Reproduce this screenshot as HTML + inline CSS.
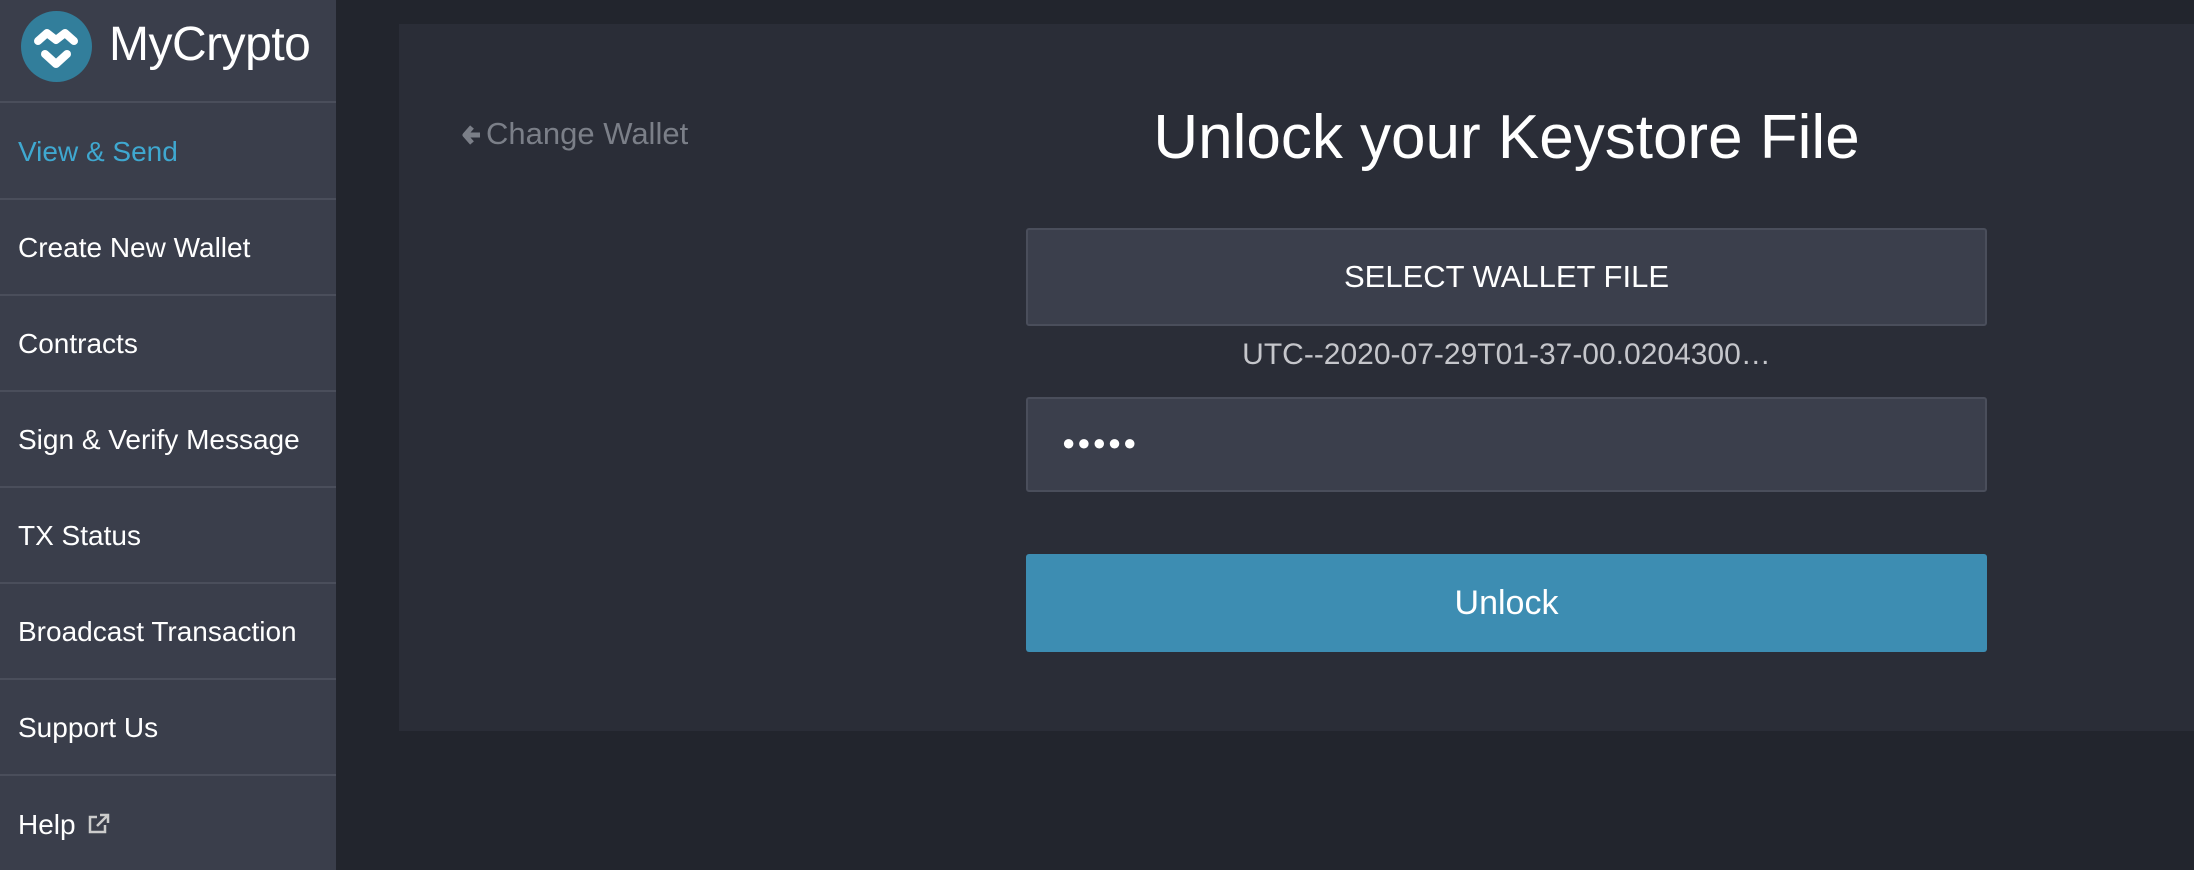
<!DOCTYPE html>
<html><head><meta charset="utf-8"><style>
*{box-sizing:border-box;margin:0;padding:0}
body{width:2194px;height:870px;background:#22252d;font-family:"Liberation Sans",sans-serif;position:relative;overflow:hidden}
.side{position:absolute;left:0;top:0;width:336px;height:870px;background:#3a3e4b}
.logo{position:absolute;left:21px;top:11px;width:71px;height:71px;border-radius:50%;background:#327e9b}
.brand{position:absolute;left:109px;top:17px;font-size:48px;color:#fff;letter-spacing:-0.5px}
.sep{position:absolute;left:0;width:336px;height:2px;background:#4a4e5b}
.item{position:absolute;left:18px;font-size:28px;color:#fff;transform:translateY(-50%)}
.panel{position:absolute;left:399px;top:24px;width:1800px;height:707px;background:#2a2d37}
.back{position:absolute;left:462px;top:116px;font-size:31px;color:#7b7f88}
.title{position:absolute;left:1026px;width:961px;top:102px;text-align:center;font-size:62px;color:#fff}
.btn{position:absolute;left:1026px;width:961px;background:#3b3f4c;border:2px solid #4a4e5b;border-radius:3px;color:#fff;text-align:center}
.file{position:absolute;left:1026px;width:961px;top:338px;text-align:center;font-size:30px;color:#c5c6cb}
.unlock{position:absolute;left:1026px;width:961px;top:554px;height:98px;background:#3d8db2;border-radius:3px;color:#fff;font-size:34px;text-align:center;line-height:98px}
</style></head><body>
<div class="side">
<div class="logo"><svg width="71" height="71" viewBox="0 0 71 71"><path d="M17 30 L26 22 L35 29 L44 22 L53 30" stroke="#fff" stroke-width="8" fill="none" stroke-linecap="round" stroke-linejoin="round"/><path d="M24 43 L35 53 L46 43" stroke="#fff" stroke-width="8" fill="none" stroke-linecap="round" stroke-linejoin="round"/></svg></div>
<div class="brand">MyCrypto</div>
<div class="sep" style="top:101px"></div>
<div class="item" style="top:152px;color:#3fa8d0">View &amp; Send</div>
<div class="sep" style="top:198px"></div>
<div class="item" style="top:248px">Create New Wallet</div>
<div class="sep" style="top:294px"></div>
<div class="item" style="top:344px">Contracts</div>
<div class="sep" style="top:390px"></div>
<div class="item" style="top:440px">Sign &amp; Verify Message</div>
<div class="sep" style="top:486px"></div>
<div class="item" style="top:536px">TX Status</div>
<div class="sep" style="top:582px"></div>
<div class="item" style="top:632px">Broadcast Transaction</div>
<div class="sep" style="top:678px"></div>
<div class="item" style="top:728px">Support Us</div>
<div class="sep" style="top:774px"></div>
<div class="item" style="top:825px">Help <svg width="24" height="22" viewBox="0 0 24 22" style="vertical-align:-1px;margin-left:4px"><path d="M10 4H3v15h15v-7" stroke="#ccc" stroke-width="2.5" fill="none"/><path d="M13 2h8v8M21 2L10 13" stroke="#ccc" stroke-width="2.5" fill="none"/></svg></div>
</div>
<div class="panel"></div>
<div class="back"><svg width="20" height="22" viewBox="0 0 20 22" style="vertical-align:-2px;margin-right:4px"><path d="M10 3L3 11l7 8M3 11h15" stroke="#7b7f88" stroke-width="5" fill="none" stroke-linejoin="round"/></svg>Change Wallet</div>
<div class="title">Unlock your Keystore File</div>
<div class="btn" style="top:228px;height:98px;line-height:94px;font-size:31px">SELECT WALLET FILE</div>
<div class="file">UTC--2020-07-29T01-37-00.0204300…</div>
<div class="btn" style="top:397px;height:95px;text-align:left;padding-left:34px;line-height:88px;font-size:22px;letter-spacing:2px">●●●●●</div>
<div class="unlock">Unlock</div>
</body></html>
